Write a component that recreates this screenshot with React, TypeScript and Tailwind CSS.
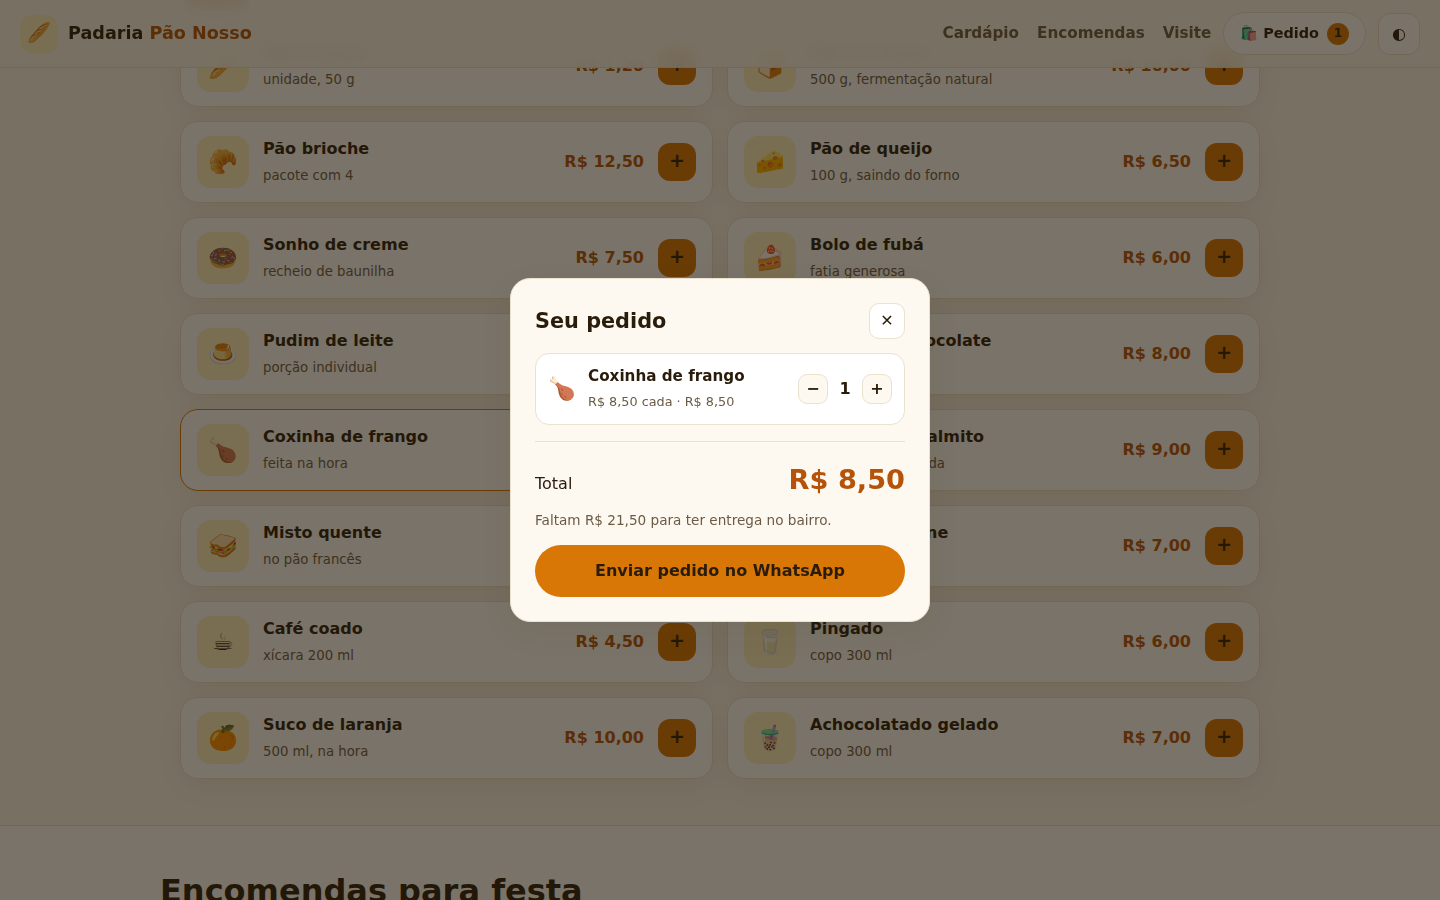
import clsx from 'clsx'

type Product = {
  emoji: string
  name: string
  detail: string
  price: string
  inCart?: boolean
}

const categories = ['Tudo', 'Pães', 'Doces', 'Salgados', 'Bebidas']

const products: Product[] = [
  { emoji: '🥖', name: 'Pão francês', detail: 'unidade, 50 g', price: 'R$ 1,20' },
  { emoji: '🍞', name: 'Pão de forma', detail: '500 g, fermentação natural', price: 'R$ 16,00' },
  { emoji: '🥐', name: 'Pão brioche', detail: 'pacote com 4', price: 'R$ 12,50' },
  { emoji: '🧀', name: 'Pão de queijo', detail: '100 g, saindo do forno', price: 'R$ 6,50' },
  { emoji: '🍩', name: 'Sonho de creme', detail: 'recheio de baunilha', price: 'R$ 7,50' },
  { emoji: '🍰', name: 'Bolo de fubá', detail: 'fatia generosa', price: 'R$ 6,00' },
  { emoji: '🍮', name: 'Pudim de leite', detail: 'porção individual', price: 'R$ 8,00' },
  { emoji: '🍪', name: 'Cookie de chocolate', detail: 'unidade', price: 'R$ 8,00' },
  { emoji: '🍗', name: 'Coxinha de frango', detail: 'feita na hora', price: 'R$ 8,50', inCart: true },
  { emoji: '🥧', name: 'Empada de palmito', detail: 'massa amanteigada', price: 'R$ 9,00' },
  { emoji: '🥪', name: 'Misto quente', detail: 'no pão francês', price: 'R$ 12,00' },
  { emoji: '🥟', name: 'Esfiha de carne', detail: 'aberta', price: 'R$ 7,00' },
  { emoji: '☕', name: 'Café coado', detail: 'xícara 200 ml', price: 'R$ 4,50' },
  { emoji: '🥛', name: 'Pingado', detail: 'copo 300 ml', price: 'R$ 6,00' },
  { emoji: '🍊', name: 'Suco de laranja', detail: '500 ml, na hora', price: 'R$ 10,00' },
  { emoji: '🧋', name: 'Achocolatado gelado', detail: 'copo 300 ml', price: 'R$ 7,00' },
]

const Header = () => (
  <header className="sticky top-0 z-10 flex h-[68px] shrink-0 items-center justify-between border-b border-[#ebe1cf] bg-[#fdf8f0]/90 px-5 backdrop-blur-[8px]">
    <a href="#" className="flex items-center gap-2.5 text-[17.6px] font-bold">
      <span className="grid size-[38px] place-items-center rounded-xl bg-amber-100 text-[19.2px]">🥖</span>
      <span>
        Padaria <span className="text-[#b45309]">Pão Nosso</span>
      </span>
    </a>
    <div className="flex items-center gap-3">
      <nav className="flex gap-[18px] text-[15.2px] font-bold text-[#6b5b45]">
        <a href="#cardapio">Cardápio</a>
        <a href="#encomendas">Encomendas</a>
        <a href="#visite">Visite</a>
      </nav>
      <button className="flex h-[43px] items-center gap-2 rounded-full border border-[#ebe1cf] bg-white px-4 text-[14.4px] font-bold">
        <span>🛍️ Pedido</span>
        <span className="grid size-[22px] place-items-center rounded-full bg-[#d97706] text-[12.5px]">1</span>
      </button>
      <button className="grid size-[42px] place-items-center rounded-xl border border-[#ebe1cf] bg-white text-base">◐</button>
    </div>
  </header>
)

const ProductCard: React.FC<{ product: Product }> = ({ product }) => (
  <article
    className={clsx(
      'flex h-[82px] items-center gap-3.5 rounded-[18px] border bg-white px-4 shadow-[0_10px_30px_rgba(80,52,10,0.08)]',
      product.inCart ? 'border-[#d97706]' : 'border-[#ebe1cf]'
    )}
  >
    <div className="grid size-[52px] shrink-0 place-items-center rounded-[14px] bg-amber-100 text-2xl">{product.emoji}</div>
    <div className="min-w-0 flex-1 pb-[3px]">
      <h3 className="text-base leading-[26px] font-bold">{product.name}</h3>
      <p className="mt-[3px] text-[13.28px] leading-[21px] text-[#6b5b45]">{product.detail}</p>
    </div>
    <strong className="text-[#b45309]">{product.price}</strong>
    <button className="grid size-[38px] place-items-center rounded-xl bg-[#d97706] pb-0.5 text-[19.2px] leading-none font-bold">+</button>
  </article>
)

const StepButton: React.FC<{ label: string }> = ({ label }) => (
  <button className="grid size-[30px] place-items-center rounded-[9px] border border-[#ebe1cf] bg-[#fdf8f0] text-base leading-none font-bold">
    {label}
  </button>
)

const OrderDialog = () => (
  <div className="fixed inset-0 z-20 grid place-items-center bg-[#1f1505]/60">
    <div
      role="dialog"
      className="h-[344px] w-[420px] rounded-[20px] border border-[#ebe1cf] bg-[#fdf8f0] p-6 shadow-[0_10px_30px_rgba(80,52,10,0.08)]"
    >
      <div className="flex h-9 items-center justify-between">
        <h2 className="pt-0.5 text-[20.8px] font-bold">Seu pedido</h2>
        <button className="grid size-9 place-items-center rounded-[10px] border border-[#ebe1cf] bg-white text-base leading-none">✕</button>
      </div>
      <div className="mt-3.5 flex h-[72px] items-center gap-3 rounded-[14px] border border-[#ebe1cf] bg-white px-3">
        <span className="text-[22.4px]">🍗</span>
        <div className="flex-1 pb-[3px]">
          <p className="text-[15.2px] leading-[25px] font-bold">Coxinha de frango</p>
          <p className="mt-0.5 text-[12.8px] leading-[21px] text-[#6b5b45]">R$ 8,50 cada · R$ 8,50</p>
        </div>
        <div className="flex items-center">
          <StepButton label="−" />
          <span className="w-[34px] text-center font-bold">1</span>
          <StepButton label="+" />
        </div>
      </div>
      <div className="mt-4 flex items-baseline justify-between border-t border-[#ebe1cf] pt-4">
        <span>Total</span>
        <strong className="text-[27.2px] leading-[44px] text-[#b45309]">R$ 8,50</strong>
      </div>
      <p className="mt-[7px] text-[13.6px] leading-[22px] text-[#6b5b45]">Faltam R$ 21,50 para ter entrega no bairro.</p>
      <button className="mt-3.5 h-[52px] w-full rounded-full bg-[#d97706] font-bold">Enviar pedido no WhatsApp</button>
    </div>
  </div>
)

export default function App() {
  return (
    <div className="flex h-screen flex-col overflow-hidden bg-[#fdf8f0] font-['DejaVu_Sans',sans-serif] text-[#2a1c0b]">
      <Header />
      <section id="cardapio" className="-mt-[97px] shrink-0 pb-[46px]">
        <div className="mx-auto w-[1080px]">
          <div className="mb-4 flex gap-2">
            {categories.map((category, i) => (
              <button
                key={category}
                className={clsx(
                  'h-[38px] rounded-full border px-4 text-[14.4px] font-bold',
                  i === 0 ? 'border-[#b45309] bg-[#b45309] text-white' : 'border-[#ebe1cf] bg-white text-[#6b5b45]'
                )}
              >
                {category}
              </button>
            ))}
          </div>
          <div className="grid grid-cols-2 gap-3.5">
            {products.map((product) => (
              <ProductCard key={product.name} product={product} />
            ))}
          </div>
        </div>
      </section>
      <section id="encomendas" className="shrink-0 border-t border-[#ebe1cf] bg-white pt-10">
        <h2 className="mx-auto w-[1120px] text-[32px] leading-[51px] font-bold">Encomendas para festa</h2>
      </section>
      <OrderDialog />
    </div>
  )
}
